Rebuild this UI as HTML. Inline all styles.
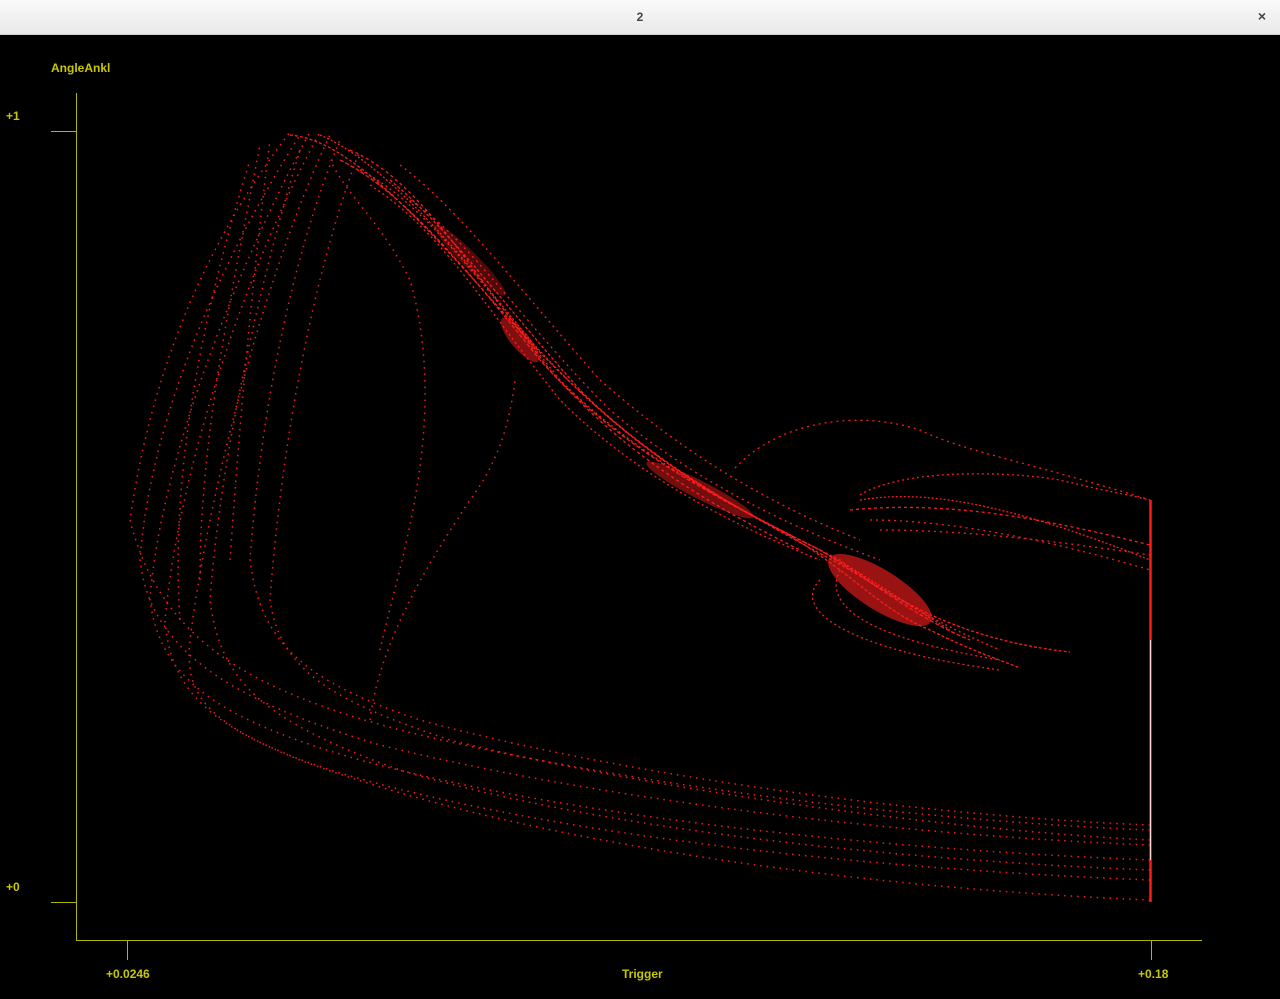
<!DOCTYPE html>
<html><head><style>
html,body{margin:0;padding:0;background:#000;width:1280px;height:999px;overflow:hidden;font-family:"Liberation Sans",sans-serif}
.bar{position:absolute;left:0;top:0;width:1280px;height:34px;background:linear-gradient(#fafafa,#e9e9e9);border-bottom:1px solid #d0d0d0}
.bar .t{position:absolute;left:0;width:1280px;top:10px;text-align:center;font-size:12px;font-weight:bold;color:#444}
.bar .x{position:absolute;right:14px;top:8px;font-size:14px;font-weight:bold;color:#444}
.l{position:absolute;color:#c8c800;font-size:12px;font-weight:bold}
</style></head><body>
<div class="bar"><div class="t">2</div><div class="x">×</div></div>
<div class="l" style="left:51px;top:61px">AngleAnkl</div>
<div class="l" style="left:6px;top:109px">+1</div>
<div class="l" style="left:6px;top:880px">+0</div>
<div class="l" style="left:106px;top:967px">+0.0246</div>
<div class="l" style="left:622px;top:967px">Trigger</div>
<div class="l" style="left:1138px;top:967px">+0.18</div>
<svg width="1280" height="999" style="position:absolute;left:0;top:0">
<g stroke="#b4b400" stroke-width="1" fill="none">
<path d="M76.5 93V940.5H1202M51 131.5H76M51 902.5H76M127.5 940V960M1151.5 940V960"/>
</g>
<g stroke="#ff1a1a" fill="none" stroke-width="1.5" stroke-dasharray="1.5 5">
<path d="M1150 830 C900 820 600 780 400 730 C250 690 160 640 130 520 C150 380 200 250 290 132"/>
<path d="M1150 845 C900 835 600 800 380 745 C230 700 150 650 140 560 C150 420 220 260 300 135"/>
<path d="M1150 860 C900 850 580 820 360 760 C220 720 160 680 150 600 C160 460 240 260 310 132"/>
<path d="M1150 880 C900 870 560 840 330 770 C210 730 170 690 165 620 C180 460 250 260 320 132"/>
<path d="M1150 900 C900 890 540 850 300 760 C200 720 185 690 190 640 C210 480 270 260 330 135"/>
<path d="M1150 825 C900 815 600 770 420 720 C300 680 260 640 250 560 C260 420 290 260 340 140"/>
<path d="M1150 840 C950 830 650 790 450 740 C330 700 280 670 270 600 C280 460 310 280 360 150"/>
<path d="M1150 870 C900 860 600 830 400 770 C260 720 220 680 210 600 C220 460 260 280 300 150"/>
<path d="M370 720 C380 640 430 560 470 500 C500 460 510 420 515 380"/>
<path d="M380 650 C400 560 450 420 410 280 C380 220 350 200 330 160"/>
<path d="M230 560 C240 420 250 300 270 140"/>
<path d="M200 580 C200 440 230 300 260 145"/>
<path d="M180 620 C170 480 200 320 250 160"/>
</g>
<g stroke="#ff1a1a" fill="none" stroke-width="1.3">
<path d="M290 135 C350 140 420 220 510 320 C600 420 680 480 780 530 C850 570 880 610 930 630 C970 650 1000 660 1020 668" stroke-dasharray="3 2"/>
<path d="M320 135 C380 160 450 240 530 340 C620 440 700 490 800 540 C860 570 900 600 950 630" stroke-dasharray="2 2"/>
<path d="M340 160 C400 190 460 260 540 360 C620 450 720 500 820 550 C870 580 920 620 970 640" stroke-dasharray="4 2"/>
<path d="M360 170 C420 200 480 280 560 380 C640 460 740 510 840 560 C880 590 930 620 1000 650" stroke-dasharray="2 3"/>
<path d="M390 180 C450 230 500 300 580 390 C660 470 760 520 850 570 C900 600 960 640 1070 652" stroke-dasharray="3 2"/>
<path d="M370 185 C440 230 480 300 560 400 C630 470 720 520 820 560" stroke-dasharray="2 3"/>
<path d="M400 165 C460 210 520 290 600 380 C680 450 760 500 860 540" stroke-dasharray="2 4"/>
<path d="M350 150 C420 180 470 270 550 370 C620 450 700 500 800 550" stroke-dasharray="3 3"/>
<path d="M410 200 C470 240 520 320 610 410 C680 470 770 520 880 560" stroke-dasharray="2 4"/>
<path d="M860 500 C920 490 1000 500 1150 560" stroke-dasharray="2 2"/>
<path d="M850 510 C950 500 1050 520 1150 545" stroke-dasharray="3 3"/>
<path d="M870 520 C950 520 1050 540 1150 570" stroke-dasharray="2 4"/>
<path d="M880 530 C960 530 1050 540 1150 555" stroke-dasharray="2 4"/>
<path d="M860 495 C900 470 1000 470 1060 480 C1100 490 1130 495 1150 500" stroke-dasharray="2 3"/>
<path d="M735 468 C780 420 860 410 920 430 C960 450 1020 460 1150 500" stroke-dasharray="2 4"/>
<path d="M820 580 C790 610 850 650 1000 670" stroke-dasharray="2 3"/>
<path d="M840 570 C820 610 880 640 1000 660" stroke-dasharray="2 3"/>
</g>
<g fill="#ff2020">
<ellipse cx="880" cy="590" rx="60" ry="20" transform="rotate(32 880 590)" opacity="0.6"/>
<ellipse cx="520" cy="340" rx="28" ry="9" transform="rotate(50 520 340)" opacity="0.5"/>
<ellipse cx="700" cy="490" rx="60" ry="9" transform="rotate(27 700 490)" opacity="0.45"/>
<ellipse cx="470" cy="260" rx="50" ry="8" transform="rotate(45 470 260)" opacity="0.3"/>
</g>
<path d="M1150.5 500V902" stroke="#ff1a1a" stroke-width="2.5"/>
<path d="M1150.5 640V860" stroke="#fff" stroke-width="1" opacity="0.8"/>
</svg>
</body></html>
